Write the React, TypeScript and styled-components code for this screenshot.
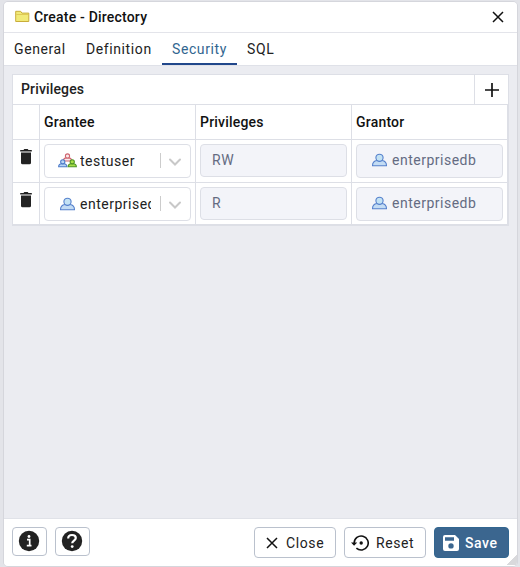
import React from 'react';
import styled, { createGlobalStyle, css } from 'styled-components';

const GlobalStyle = createGlobalStyle`
  * { box-sizing: border-box; }
  body { margin: 0; background: #e3e4e9; font-family: Roboto, sans-serif; font-size: 14px; color: #222; }
  button { font-family: inherit; }
  svg { display: block; flex: none; }
`;

const Page = styled.div`
  height: 567px;
  padding: 1px 2px 0 3px;
  overflow: hidden;
`;

const Dialog = styled.div`
  position: relative;
  display: flex;
  flex-direction: column;
  height: 566px;
  border: 1px solid #d5d6dc;
  border-radius: 5px;
  background: #ebecf1;
  overflow: hidden;
`;

const TitleBar = styled.header`
  display: flex;
  align-items: center;
  height: 31px;
  padding: 0 13px 1px 11px;
  border-bottom: 1px solid #e3e4ea;
  background: #fff;
`;

const Title = styled.h1`
  flex: 1;
  margin: 0 0 0 4px;
  font-size: 14px;
  line-height: 20px;
  font-weight: 500;
  color: #111;
  letter-spacing: 0.2px;
`;

const Tabs = styled.nav`
  display: flex;
  height: 33px;
  border-bottom: 1px solid #dfe1e8;
  background: #fff;
`;

const Tab = styled.button<{ $width: number; $active?: boolean }>`
  width: ${p => p.$width}px;
  padding: 2px 0 0 10px;
  border: 0;
  border-bottom: 2px solid ${p => (p.$active ? '#21478b' : 'transparent')};
  background: none;
  text-align: left;
  white-space: nowrap;
  font-size: 14px;
  letter-spacing: 0.6px;
  color: ${p => (p.$active ? '#326690' : '#222')};
`;

const Body = styled.main`
  flex: 1;
  padding: 8px 9px 0 8px;
`;

const Panel = styled.section`
  width: 497px;
  border: 1px solid #dddfe6;
  background: #fff;
`;

const PanelBar = styled.div`
  display: flex;
  height: 30px;
  border-bottom: 1px solid #dddfe6;
`;

const PanelTitle = styled.h2`
  flex: 1;
  margin: 0;
  padding-left: 8px;
  font-size: 14px;
  line-height: 29px;
  font-weight: 500;
  letter-spacing: 0.15px;
  color: #222;
`;

const AddButton = styled.button`
  display: flex;
  align-items: center;
  justify-content: center;
  width: 34px;
  padding: 0;
  border: 0;
  border-left: 1px solid #dddfe6;
  background: none;
`;

const Row = styled.div<{ $head?: boolean }>`
  display: grid;
  grid-template-columns: 27px 156px 156px 155px;
  width: 495px;
  height: ${p => (p.$head ? 35 : 43)}px;
  border-bottom: 1px solid #dddfe6;
  border-right: 1px solid #dddfe6;
  &:last-child { height: 42px; }
`;

const Cell = styled.div`
  min-width: 0;
  padding: 4px;
  border-right: 1px solid #dddfe6;
  &:last-child { border-right: 0; }
`;

const HeadCell = styled(Cell)`
  padding: 0 4px;
  line-height: 34px;
  font-weight: 500;
  letter-spacing: 0.2px;
  color: #111;
`;

const DeleteCell = styled(Cell)`
  padding: 8px 0 0 4px;
`;

const fieldBox = css`
  display: flex;
  align-items: center;
  width: 147px;
  border: 1px solid #dddfe6;
  border-radius: 4px;
  letter-spacing: 0.5px;
`;

const Select = styled.div`
  ${fieldBox}
  height: 34px;
  padding: 0 0 1px 13px;
  background: #fff;
`;

const IconSlot = styled.span`
  display: flex;
  justify-content: center;
  width: 19px;
`;

const SelectText = styled.span`
  width: 71px;
  margin-left: 3px;
  overflow: hidden;
  white-space: nowrap;
`;

const Divider = styled.span`
  width: 1px;
  height: 15px;
  margin: 0 7px 0 9px;
  background: #ccc;
`;

const ReadOnly = styled.div<{ $icon?: boolean }>`
  ${fieldBox}
  height: ${p => (p.$icon ? 34 : 33)}px;
  padding-left: ${p => (p.$icon ? 14 : 11)}px;
  padding-bottom: 2px;
  gap: 4px;
  background: #f3f4f9;
  color: #646b82;
`;

const Footer = styled.footer`
  display: flex;
  gap: 8px;
  height: 48px;
  padding: 8px 8px 0;
  border-top: 1px solid #e0e2e8;
  background: #fff;
`;

const Spacer = styled.span`
  flex: 1;
`;

const IconButton = styled.button`
  display: flex;
  align-items: center;
  justify-content: center;
  width: 35px;
  height: 29px;
  padding: 0 1px 1px 0;
  border: 1px solid #bac1cd;
  border-radius: 4px;
  background: #fff;
`;

const ActionButton = styled.button<{ $primary?: boolean; $width: number; $pad: number }>`
  display: flex;
  align-items: center;
  width: ${p => p.$width}px;
  height: 31px;
  padding: 0 0 0 ${p => p.$pad}px;
  border: 1px solid ${p => (p.$primary ? '#326690' : '#bac1cd')};
  border-radius: 4px;
  background: ${p => (p.$primary ? '#3b668f' : '#fff')};
  color: ${p => (p.$primary ? '#fff' : '#222')};
  font-size: 14px;
  font-weight: ${p => (p.$primary ? 500 : 400)};
  letter-spacing: 0.6px;
`;

const Label = styled.span<{ $gap: number }>`
  margin-left: ${p => p.$gap}px;
`;

const ResizeGrip = styled.span`
  position: absolute;
  right: 0;
  bottom: 1px;
  width: 10px;
  height: 10px;
  background: linear-gradient(135deg, transparent 50%, #d9d9dc 50%);
`;

const Folder = () => (
  <svg width="15" height="13" viewBox="0 0 15 13">
    <path d="M.7 11.5V1.3h5l1.2 1.8h6.9v8.4z" fill="#f1ea78" stroke="#c9ad3a" />
    <path d="M1.2 4.5h12" stroke="#dfc956" />
  </svg>
);

const Cross = () => (
  <svg width="12" height="12" viewBox="0 0 12 12">
    <path d="M1 1l10 10M11 1L1 11" stroke="#111" strokeWidth="1.5" />
  </svg>
);

const Plus = () => (
  <svg width="16" height="16" viewBox="0 0 16 16">
    <path d="M8 1v14M1 8h14" stroke="#111" strokeWidth="1.7" />
  </svg>
);

const Trash = () => (
  <svg width="18" height="18" viewBox="0 0 18 18">
    <path d="M4 4.5h10v10.2a1.5 1.5 0 0 1-1.5 1.5h-7A1.5 1.5 0 0 1 4 14.7zM3.2 2h3.3l.8-1h3.4l.8 1h3.3v1.5H3.2z" fill="#222" />
  </svg>
);

const User = () => (
  <svg width="17" height="14" viewBox="0 0 17 14">
    <path d="M1.5 12.8c0-3.3 1.9-5 4.5-5.3h5c2.6.3 4.5 2 4.5 5.3z" fill="#c3dcf4" stroke="#5580cc" strokeWidth="1.1" strokeLinejoin="round" />
    <circle cx="8.5" cy="4.8" r="3.6" fill="#c3e2f4" stroke="#5580cc" strokeWidth="1.1" />
  </svg>
);

const Person = ({ x, y, fill, stroke }: { x: number; y: number; fill: string; stroke: string }) => (
  <g transform={`translate(${x} ${y})`} fill={fill} stroke={stroke}>
    <path d="M.6 7.5C.6 5.5 2 4.5 3.5 4.5h2C7 4.5 8.4 5.5 8.4 7.5z" />
    <circle cx="4.5" cy="2.7" r="2" />
  </g>
);

const Group = () => (
  <svg width="19" height="15" viewBox="0 0 18 14">
    <Person x={4.5} y={0} fill="#f8e9eb" stroke="#cf6670" />
    <Person x={0} y={5.5} fill="#b9d5f5" stroke="#4d7bc9" />
    <Person x={9} y={5.5} fill="#a7df48" stroke="#4e9325" />
  </svg>
);

const Chevron = () => (
  <svg width="14" height="14" viewBox="0 0 14 14">
    <path d="M2 5.5l5 5 5-5" fill="none" stroke="#c8c8c8" strokeWidth="2" strokeLinecap="round" />
  </svg>
);

const Info = () => (
  <svg width="22" height="22" viewBox="0 0 22 22">
    <circle cx="11" cy="11" r="10.2" fill="#222" />
    <circle cx="11" cy="6.5" r="1.4" fill="#fff" />
    <path d="M9 9.6h2.7v6M8.8 15.6h4.7" fill="none" stroke="#fff" strokeWidth="1.7" />
  </svg>
);

const Help = () => (
  <svg width="22" height="22" viewBox="0 0 22 22">
    <circle cx="11" cy="11" r="10.2" fill="#222" />
    <path d="M7.2 8.5C7.2 6 9 5 11 5c2.3 0 3.8 1.2 3.8 3 0 2.4-3.6 2.7-3.6 5.2" fill="none" stroke="#fff" strokeWidth="2.2" />
    <circle cx="11.2" cy="16.6" r="1.4" fill="#fff" />
  </svg>
);

const ResetIcon = () => (
  <svg width="18" height="18" viewBox="0 0 18 18">
    <path d="M3.2 9a7 7 0 1 1 2.2 5.1" fill="none" stroke="#111" strokeWidth="1.6" />
    <path d="M0 8.5h6.2L3.1 11.7z" fill="#111" />
    <circle cx="10.2" cy="9" r="1.7" fill="#111" />
  </svg>
);

const SaveIcon = () => (
  <svg width="18" height="18" viewBox="0 0 18 18">
    <path fillRule="evenodd" d="M3 1h10l4 4v10a2 2 0 0 1-2 2H3a2 2 0 0 1-2-2V3a2 2 0 0 1 2-2zM3 3.2v3.6h9V3.2zM9 9.2a2.7 2.7 0 1 0 0 5.4 2.7 2.7 0 0 0 0-5.4z" fill="#fff" />
  </svg>
);

const rows = [
  { grantee: 'testuser', group: true, privileges: 'RW', grantor: 'enterprisedb' },
  { grantee: 'enterprisedb', group: false, privileges: 'R', grantor: 'enterprisedb' },
];

export default function App() {
  return (
    <>
      <GlobalStyle />
      <Page>
        <Dialog>
          <TitleBar>
            <Folder />
            <Title>Create - Directory</Title>
            <Cross />
          </TitleBar>
          <Tabs>
            <Tab $width={72}>General</Tab>
            <Tab $width={86}>Definition</Tab>
            <Tab $width={75} $active>Security</Tab>
            <Tab $width={48}>SQL</Tab>
          </Tabs>
          <Body>
            <Panel>
              <PanelBar>
                <PanelTitle>Privileges</PanelTitle>
                <AddButton aria-label="Add"><Plus /></AddButton>
              </PanelBar>
              <Row $head>
                <Cell />
                <HeadCell>Grantee</HeadCell>
                <HeadCell>Privileges</HeadCell>
                <HeadCell>Grantor</HeadCell>
              </Row>
              {rows.map(row => (
                <Row key={row.grantee}>
                  <DeleteCell><Trash /></DeleteCell>
                  <Cell>
                    <Select>
                      <IconSlot>{row.group ? <Group /> : <User />}</IconSlot>
                      <SelectText>{row.grantee}</SelectText>
                      <Divider />
                      <Chevron />
                    </Select>
                  </Cell>
                  <Cell><ReadOnly>{row.privileges}</ReadOnly></Cell>
                  <Cell><ReadOnly $icon><User />{row.grantor}</ReadOnly></Cell>
                </Row>
              ))}
            </Panel>
          </Body>
          <Footer>
            <IconButton aria-label="Info"><Info /></IconButton>
            <IconButton aria-label="Help"><Help /></IconButton>
            <Spacer />
            <ActionButton $width={82} $pad={11}><Cross /><Label $gap={8}>Close</Label></ActionButton>
            <ActionButton $width={82} $pad={6}><ResetIcon /><Label $gap={7}>Reset</Label></ActionButton>
            <ActionButton $width={75} $pad={7} $primary><SaveIcon /><Label $gap={5}>Save</Label></ActionButton>
          </Footer>
          <ResizeGrip />
        </Dialog>
      </Page>
    </>
  );
}
